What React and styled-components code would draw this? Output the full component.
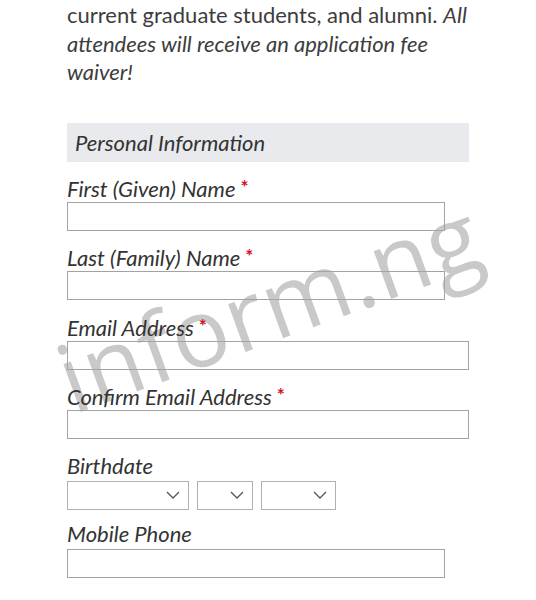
import React from "react";
import styled, { createGlobalStyle } from "styled-components";

const Global = createGlobalStyle`
  html, body { margin: 0; padding: 0; background: #fff; }
  body { font-family: "Lato", "Open Sans", sans-serif; color: #3a3a3a; }
  * { box-sizing: border-box; }
`;

const Page = styled.div`
  position: relative;
  width: 536px;
  height: 600px;
  overflow: hidden;
  padding: 0 0 0 67px;
`;

const Column = styled.div`
  position: relative;
  z-index: 1;
  width: 402px;
  display: flex;
  flex-direction: column;
`;

const Intro = styled.p`
  margin: 0;
  font-size: 22px;
  line-height: 28.5px;
  color: #3d3d3d;
  padding-top: 1px;
  white-space: nowrap;
  em { font-style: italic; }
`;

const SectionHeader = styled.h2`
  margin: 36px 0 0 0;
  height: 39px;
  background: #e8eaed;
  display: flex;
  align-items: center;
  padding: 0 8px;
  font-size: 22px;
  font-weight: 400;
  font-style: italic;
  color: #333;
`;

const Field = styled.div`
  display: flex;
  flex-direction: column;
  margin-top: ${(p) => p.$top ?? 12}px;
`;

const Label = styled.label`
  font-size: 22px;
  font-style: italic;
  line-height: 28px;
  color: #333;
  height: 29px;
  white-space: nowrap;
`;

const Req = styled.span`
  color: #d0121b;
  font-style: normal;
  font-weight: 700;
  font-size: 19px;
  margin-left: 5px;
  vertical-align: 3px;
`;

const Input = styled.div`
  width: ${(p) => (p.$wide ? 402 : 378)}px;
  height: 29px;
  border: 1.5px solid #a3a3a3;
  background: transparent;
`;

const SelectRow = styled.div`
  display: flex;
  gap: 8px;
`;

const Select = styled.div`
  width: ${(p) => p.$w}px;
  height: 29px;
  border: 1.5px solid #b0b0b0;
  background: transparent;
  display: flex;
  align-items: center;
  justify-content: flex-end;
  padding-right: 8px;
`;

const Watermark = styled.div`
  position: absolute;
  z-index: 0;
  left: 77px;
  top: 330px;
  font-family: "Open Sans", sans-serif;
  font-weight: 500;
  font-size: 95px;
  line-height: 1;
  color: #c9c9c9;
  transform: rotate(-20deg);
  transform-origin: left bottom;
  pointer-events: none;
  white-space: nowrap;
  letter-spacing: 1px;
`;

const Chevron = () => (
  <svg width="14" height="8" viewBox="0 0 14 8" fill="none">
    <path d="M1 1l6 6 6-6" stroke="#555" strokeWidth="1.3" />
  </svg>
);

export default function App() {
  return (
    <>
      <Global />
      <Page>
        <Watermark>inform.ng</Watermark>
        <Column>
          <Intro>
            current graduate students, and alumni. <em>All</em>
            <br />
            <em>attendees will receive an application fee</em>
            <br />
            <em>waiver!</em>
          </Intro>
          <SectionHeader>Personal Information</SectionHeader>
          <Field $top={11}>
            <Label>First (Given) Name<Req>*</Req></Label>
            <Input />
          </Field>
          <Field $top={11}>
            <Label>Last (Family) Name<Req>*</Req></Label>
            <Input />
          </Field>
          <Field $top={12}>
            <Label>Email Address<Req>*</Req></Label>
            <Input $wide />
          </Field>
          <Field $top={11}>
            <Label>Confirm Email Address<Req>*</Req></Label>
            <Input $wide />
          </Field>
          <Field $top={13}>
            <Label>Birthdate</Label>
            <SelectRow>
              <Select $w={122}><Chevron /></Select>
              <Select $w={56}><Chevron /></Select>
              <Select $w={75}><Chevron /></Select>
            </SelectRow>
          </Field>
          <Field $top={10}>
            <Label>Mobile Phone</Label>
            <Input />
          </Field>
        </Column>
      </Page>
    </>
  );
}
